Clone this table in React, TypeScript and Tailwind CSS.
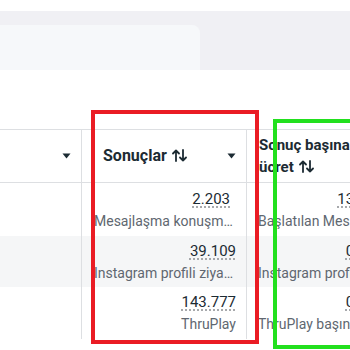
import React from "react";

function Caret() {
  return (
    <svg width="9" height="6" viewBox="0 0 9 6" className="shrink-0">
      <path d="M0.5 0.5 H8.5 L4.5 5.5 Z" fill="#1c2b33" />
    </svg>
  );
}

function SortArrows() {
  return (
    <svg width="15" height="13" viewBox="0 0 15 13" className="inline-block ml-[5px] align-[-1px]">
      <g stroke="#1c2b33" strokeWidth="1.8" fill="none" strokeLinecap="round" strokeLinejoin="round">
        <path d="M4 12 V1.5 M1 4.5 L4 1.5 L7 4.5" />
        <path d="M11 1 V11.5 M8 8.5 L11 11.5 L14 8.5" />
      </g>
    </svg>
  );
}

type Row = { value: string; label: string; cost: string; costLabel: string; striped: boolean; h: string; nudge?: boolean };

const rows: Row[] = [
  { value: "2.203", label: "Mesajlaşma konuşması başlatıldı", cost: "13,05", costLabel: "Başlatılan Mesajlaşma konuşması başına ücret", striped: false, h: "h-[53px]", nudge: true },
  { value: "39.109", label: "Instagram profili ziyareti", cost: "0,12", costLabel: "Instagram profili ziyareti başına ücret", striped: true, h: "h-[51px]" },
  { value: "143.777", label: "ThruPlay", cost: "0,05", costLabel: "ThruPlay başına ücret", striped: false, h: "h-[52px]" },
];

export default function App() {
  return (
    <div
      className="relative w-[350px] h-[350px] overflow-hidden bg-white"
      style={{ fontFamily: "Roboto, 'Liberation Sans', sans-serif" }}
    >
      <div className="h-[11px]" />
      <div className="h-[59px] bg-[#f0f0f4] pt-[14px]">
        <div className="w-[200px] h-full bg-[#f6f8fa] rounded-tr-[8px]" />
      </div>
      <div className="h-[59px]" />

      <div className="w-[384px]">
        <div className="grid grid-cols-[82px_165px_137px] h-[54px] border-y border-[#dddfe2]">
          <div className="flex items-center justify-end pr-[10px] border-r border-[#dddfe2]">
            <Caret />
          </div>
          <div className="flex items-center justify-between pl-[21px] pr-[10px] border-r border-[#dddfe2]">
            <span className="text-[16px] font-bold text-[#1c2b33] whitespace-nowrap leading-[22px]">
              Sonuçlar
              <SortArrows />
            </span>
            <Caret />
          </div>
          <div className="flex items-center pl-[12px] overflow-hidden">
            <span className="text-[15px] font-bold text-[#1c2b33] leading-[22px] whitespace-nowrap">
              Sonuç başına
              <br />
              ücret
              <SortArrows />
            </span>
          </div>
        </div>

        {rows.map((r, i) => (
          <div
            key={i}
            className={`grid grid-cols-[82px_165px_137px] ${r.h} ${r.striped ? "bg-[#f5f6f7]" : "bg-white"}`}
          >
            <div className="border-r border-[#dddfe2]" />
            <div className="flex flex-col justify-center items-end pl-[12px] pr-[10px] border-r border-[#dddfe2] min-w-0">
              <span
                className={`text-[15px] leading-[20px] text-[#1c2b33] underline decoration-dotted decoration-[#8a8d91] underline-offset-[3px] ${r.nudge ? "mr-[6px]" : ""}`}
              >
                {r.value}
              </span>
              <span className="mt-[2px] w-full text-right text-[14px] leading-[20px] text-[#606770] truncate">
                {r.label}
              </span>
            </div>
            <div className="flex flex-col justify-center pl-[11px] pr-[10px] overflow-hidden min-w-0">
              <span className="self-end text-[15px] leading-[20px] text-[#1c2b33] underline decoration-dotted decoration-[#8a8d91] underline-offset-[3px]">
                {r.cost}
              </span>
              <span className="mt-[2px] text-[14px] leading-[20px] text-[#606770] whitespace-nowrap">
                {r.costLabel}
              </span>
            </div>
          </div>
        ))}
      </div>

      <div className="absolute left-[91px] top-[110px] w-[168px] h-[234px] border-4 border-[#ea1c24]" />
      <div className="absolute left-[273px] top-[119px] w-[100px] h-[230px] border-4 border-[#22e01e]" />
    </div>
  );
}
